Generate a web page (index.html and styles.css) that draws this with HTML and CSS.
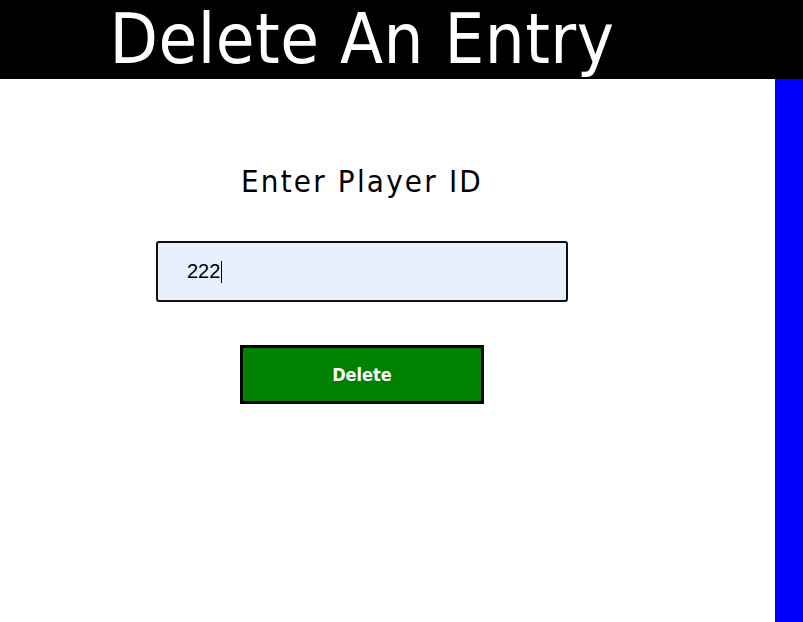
FILE: index.html
```html
<!DOCTYPE html>
<html>
<head>
<meta charset="utf-8">
<link rel="stylesheet" href="styles.css">
</head>
<body>
<header class="topbar">
  <h1 class="title">Delete An Entry</h1>
</header>
<div class="layout">
  <main class="content">
    <form class="form">
      <label class="label" for="pid">Enter Player ID</label>
      <div class="field"><span class="value">222</span><span class="caret"></span></div>
      <button class="btn" type="button">Delete</button>
    </form>
  </main>
  <aside class="sidebar"></aside>
</div>
</body>
</html>
```

FILE: styles.css
```css
html, body {
  margin: 0;
  padding: 0;
  height: 100%;
  background: #fff;
  font-family: "DejaVu Sans", sans-serif;
}
body {
  display: flex;
  flex-direction: column;
  overflow: hidden;
}
.topbar {
  background: #000;
  height: 79px;
  width: 100%;
  display: flex;
  align-items: center;
}
.title {
  width: 724px;
  margin: 0;
  text-align: center;
  color: #fff;
  font-family: "DejaVu Sans Condensed", "DejaVu Sans", sans-serif;
  font-weight: normal;
  font-size: 70px;
  line-height: 79px;
  letter-spacing: 0.5px;
  white-space: nowrap;
}
.layout {
  flex: 1;
  display: grid;
  grid-template-columns: 724px 1fr 28px;
}
.content {
  grid-column: 1;
}
.sidebar {
  grid-column: 3;
  background: #00f;
}
.form {
  display: flex;
  flex-direction: column;
  align-items: center;
  padding-top: 82px;
}
.label {
  font-family: "DejaVu Sans Condensed", "DejaVu Sans", sans-serif;
  font-size: 31px;
  line-height: 40px;
  letter-spacing: 2.2px;
  color: #000;
}
.field {
  margin-top: 40px;
  width: 379px;
  height: 57px;
  border: 2px solid #111;
  border-radius: 3px;
  background: #e8f0fe;
  display: flex;
  align-items: center;
  padding-left: 29px;
  box-sizing: content-box;
}
.value {
  font-family: "Liberation Sans", Arial, sans-serif;
  font-size: 20px;
  color: #000;
}
.caret {
  display: inline-block;
  width: 1px;
  height: 22px;
  background: #000;
  margin-left: 1px;
}
.btn {
  margin-top: 43px;
  width: 244px;
  height: 59px;
  box-sizing: border-box;
  border: 3px solid #000;
  background: #008000;
  color: #fff;
  font-family: "DejaVu Sans Condensed", "DejaVu Sans", sans-serif;
  font-weight: bold;
  font-size: 18px;
  padding: 0;
}
```
